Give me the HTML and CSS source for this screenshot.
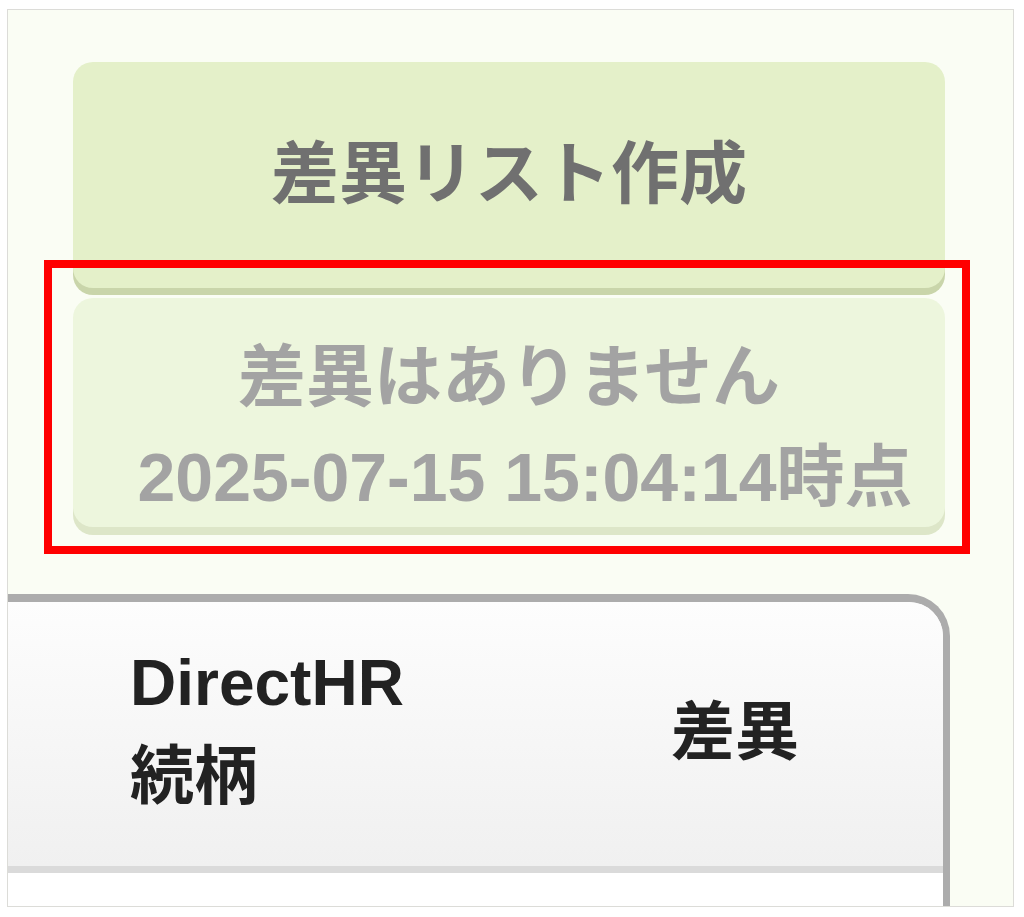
FILE: index.html
```html
<!DOCTYPE html>
<html lang="ja">
<head>
    <meta charset="UTF-8">
    <title>差異リスト</title>
    <link rel="stylesheet" href="styles.css">
</head>
<body>
    <div class="frame">
        <div class="actions">
            <button class="make-btn">差異リスト作成</button>
            <div class="status">
                <div>差異はありません</div>
                <div class="stamp">2025-07-15 15:04:14時点</div>
            </div>
        </div>

        <div class="table">
            <div class="table-head">
                <div class="th th-name">DirectHR<br>続柄</div>
                <div class="th th-diff">差異</div>
                <div class="th"></div>
            </div>
            <div class="table-body"></div>
        </div>

        <!-- highlight box -->
        <div class="highlight"></div>
    </div>
</body>
</html>
```

FILE: styles.css
```css
body {
    margin: 0;
    background: #fff;
    font-family: "Liberation Sans", "Noto Sans CJK JP", sans-serif;
    font-weight: bold;
}

.frame {
    position: relative;
    box-sizing: border-box;
    margin: 9px 0 0 7px;
    width: 1007px;
    height: 898px;
    border: 1px solid #dcdcd8;
    background: #fafdf4;
    overflow: hidden;
    padding-top: 52px;
}

.actions {
    margin-left: 65px;
    width: 872px;
}

.make-btn {
    display: flex;
    align-items: center;
    justify-content: center;
    box-sizing: border-box;
    width: 100%;
    height: 226px;
    padding: 0 0 14px;
    border: none;
    border-radius: 20px;
    background: #e4f0c9;
    box-shadow: 0 7px 0 #c9d5aa;
    color: #707070;
    font-family: inherit;
    font-weight: bold;
    font-size: 68px;
    cursor: pointer;
}

.status {
    box-sizing: border-box;
    margin-top: 10px;
    height: 229px;
    padding-top: 29px;
    border-radius: 20px;
    background: #edf6dd;
    box-shadow: 0 8px 0 #dde6c8;
    color: #a3a3a3;
    font-size: 68px;
    line-height: 100px;
    text-align: center;
}

.stamp {
    padding-left: 32px;
}

/* Table */
.table {
    box-sizing: border-box;
    margin: 67px 0 0 -20px;
    width: 962px;
    height: 400px;
    border-top: 8px solid #acacac;
    border-right: 7px solid #acacac;
    border-top-right-radius: 42px;
    background: #fff;
}

.table-head {
    display: grid;
    grid-template-columns: 612px 270px 1fr;
    height: 264px;
    border-top-right-radius: 34px;
    border-bottom: 7px solid #dadada;
    background: linear-gradient(#fdfdfd, #f0f0f0);
    color: #222;
    font-size: 64px;
}

.th {
    display: flex;
    align-items: center;
}

.th-name {
    padding: 0 0 8px 142px;
    line-height: 93px;
}

.th-diff {
    justify-content: center;
    padding-bottom: 16px;
}

.highlight {
    position: absolute;
    left: 36px;
    top: 250px;
    box-sizing: border-box;
    width: 926px;
    height: 294px;
    border: 8px solid #ff0000;
}
```
